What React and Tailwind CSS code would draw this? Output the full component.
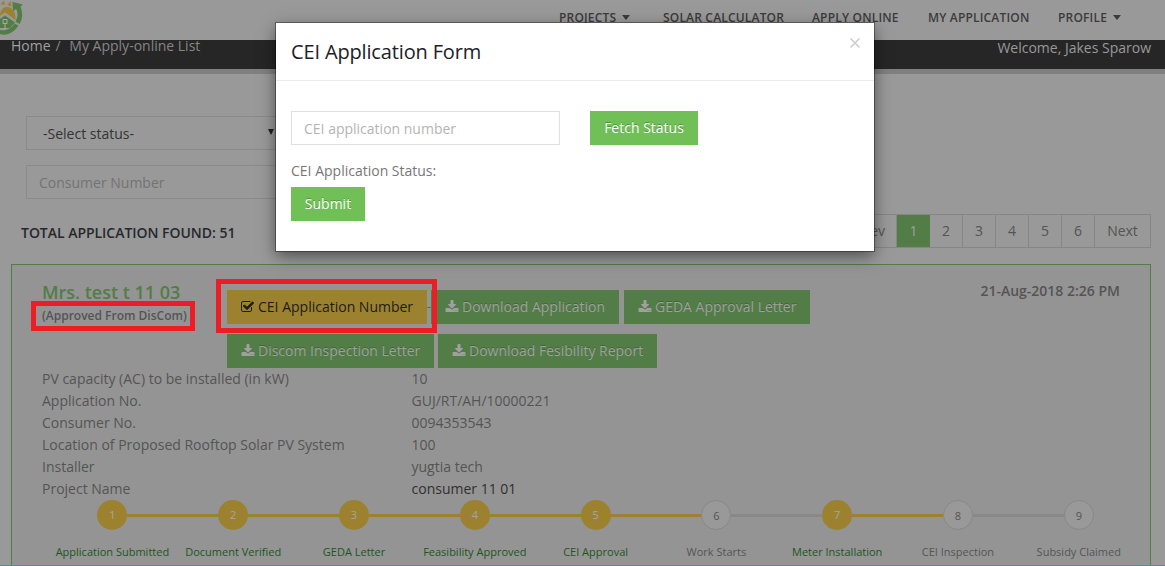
function Caret() {
  return <span className="mb-[2px] ml-[6px] h-0 w-0 border-x-4 border-t-[5px] border-x-transparent border-t-[#3b3b3b]" />;
}

function DownloadIcon() {
  return (
    <svg className="size-[14px] shrink-0" viewBox="0 0 1792 1792" fill="currentColor">
      <path d="M1344 1344q0-26-19-45t-45-19-45 19-19 45 19 45 45 19 45-19 19-45zm256 0q0-26-19-45t-45-19-45 19-19 45 19 45 45 19 45-19 19-45zm128-224v320q0 40-28 68t-68 28h-1472q-40 0-68-28t-28-68v-320q0-40 28-68t68-28h465l135 136q58 56 136 56t136-56l136-136h464q40 0 68 28t28 68zm-325-569q17 41-14 70l-448 448q-18 19-45 19t-45-19l-448-448q-31-29-14-70 17-39 59-39h256v-448q0-26 19-45t45-19h256q26 0 45 19t19 45v448h256q42 0 59 39z" />
    </svg>
  );
}

function CheckIcon() {
  return (
    <svg className="size-[14px] shrink-0" viewBox="64 0 1792 1792" fill="currentColor">
      <path d="M1472 930v318q0 119-84.5 203.5t-203.5 84.5h-832q-119 0-203.5-84.5t-84.5-203.5v-832q0-119 84.5-203.5t203.5-84.5h832q63 0 117 25 15 7 18 23 3 17-9 29l-49 49q-10 10-23 10-3 0-9-2-23-6-45-6h-832q-66 0-113 47t-47 113v832q0 66 47 113t113 47h832q66 0 113-47t47-113v-254q0-13 9-22l64-64q10-10 23-10 6 0 12 3 20 8 20 29zm231-489l-814 814q-24 24-57 24t-57-24l-430-430q-24-24-24-57t24-57l110-110q24-24 57-24t57 24l263 263 647-647q24-24 57-24t57 24l110 110q24 24 24 57t-24 57z" />
    </svg>
  );
}

function Logo() {
  return (
    <svg className="block h-9 w-6" viewBox="0 0 24 36">
      <path d="M0 14C1 9 4 6.500 8 7C13 8 16 13 15.500 20L5 12.500L0 16Z" fill="#9c822e" />
      <path d="M0.500 4.500L3.500 0.500L5.500 4.500ZM7 5L10.500 1L11.500 6.500Z" fill="#9c822e" />
      <path d="M0 19L5 15.500L15 22.500L10 28H0Z" fill="#527d46" />
      <path d="M0 17L5 13.500L19 24" fill="none" stroke="#999" strokeWidth="1.500" />
      <path d="M12.500 2L23 4.500L20.500 6.500C23.500 15 22 20 19.500 24L15.500 21.500C18.500 16 18 12 16 9L13 11Z" fill="#527d46" />
      <path d="M18.500 25.500C13 34 5 36 0 34V30C6 31 11 29 14.500 23.500Z" fill="#527d46" />
      <path d="M3 19.500H7V23.500H3ZM5 24V29" fill="none" stroke="#aaa" strokeWidth="1" />
    </svg>
  );
}

const nav = [
  ["PROJECTS", true, "w-[104px]"],
  ["SOLAR CALCULATOR", false, "w-[149px]"],
  ["APPLY ONLINE", false, "w-[116px]"],
  ["MY APPLICATION", false, "w-[130px]"],
  ["PROFILE", true, "w-[107px]"],
];

const details = [
  ["PV capacity (AC) to be installed (in kW)", "10"],
  ["Application No.", "GUJ/RT/AH/10000221"],
  ["Consumer No.", "0094353543"],
  ["Location of Proposed Rooftop Solar PV System", "100"],
  ["Installer", "yugtia tech"],
  ["Project Name", "consumer 11 01"],
];

const steps = [
  ["Application Submitted", true],
  ["Document Verified", true],
  ["GEDA Letter", true],
  ["Feasibility Approved", true],
  ["CEI Approval", true],
  ["Work Starts", false],
  ["Meter Installation", true],
  ["CEI Inspection", false],
  ["Subsidy Claimed", false],
];

function GreenButton({ children, width }) {
  return (
    <button className={"flex h-[34px] shrink-0 items-center gap-[3px] whitespace-nowrap bg-[#527d46] pl-[14px] text-[#a0a0a0] [text-shadow:0_-1px_0_rgba(0,0,0,0.2)] " + width}>
      <DownloadIcon />
      <span>{children}</span>
    </button>
  );
}

function Modal() {
  return (
    <div className="absolute left-[276px] top-[23px] h-[228px] w-[598px] bg-white shadow-[0_5px_15px_rgba(0,0,0,0.5),0_0_0_1px_rgba(0,0,0,0.35)]">
      <div className="flex h-[58px] items-start justify-between border-b border-[#ebebeb] pl-[15px] pr-[14px]">
        <h4 className="pt-[14px] text-[20px] leading-[30px] tracking-[-0.15px] text-[#1d2127]">CEI Application Form</h4>
        <svg className="mt-[15px] size-[10px]" viewBox="0 0 10 10" stroke="#ccc" strokeWidth="1.500">
          <path d="M0.500 0.500L9.500 9.500M9.500 0.500L0.500 9.500" />
        </svg>
      </div>
      <div className="px-[15px] pt-[30px]">
        <div className="flex gap-[30px]">
          <div className="flex h-[34px] w-[269px] items-center border border-[#e0e0e0] px-3 pb-px pt-[2px] text-[#b4b4b4]">CEI application number</div>
          <button className="h-[34px] w-[108px] bg-[#71bf57] text-white [text-shadow:0_-1px_0_rgba(0,0,0,0.25)]">Fetch Status</button>
        </div>
        <div className="mt-[15px] h-[27px] leading-[22px] text-[#777]">CEI Application Status:</div>
        <button className="h-[34px] w-[74px] bg-[#71bf57] text-white [text-shadow:0_-1px_0_rgba(0,0,0,0.25)]">Submit</button>
      </div>
    </div>
  );
}

export default function App() {
  return (
    <div className="relative flex h-[566px] w-[1165px] flex-col overflow-hidden border-b border-[#1fa3bb] bg-[#999] font-['Open_Sans',sans-serif] text-[14px] leading-[22px] text-[#545454]">
      <header className="flex h-10 shrink-0 items-start justify-between">
        <Logo />
        <nav className="flex pt-2 text-[12px] font-semibold leading-[20px] tracking-[0.18px] text-[#3b3b3b]">
          {nav.map(([name, caret, width]) => (
            <div key={name} className={"flex shrink-0 items-center whitespace-nowrap " + width}>
              {name}
              {caret && <Caret />}
            </div>
          ))}
        </nav>
      </header>
      <div className="flex h-[34px] shrink-0 justify-between border-b-[5px] border-[#808080] bg-[#262626] pl-[11px] pr-[14px]">
        <div className="-mt-[5px] whitespace-pre text-[#858585]"><span className="text-[#a0a0a0]">Home</span><span className="mx-[5px]">/</span> <span>My Apply-online List</span></div>
        <div className="-mt-[3px] text-[#999]">Welcome, Jakes Sparow</div>
      </div>

      <div className="flex h-[190px] shrink-0 flex-col px-[21px] pt-[42px]">
        <div className="ml-[5px] flex h-[34px] w-[260px] shrink-0 items-center justify-between border border-[#8a8a8a] pl-4 pr-[11px] pt-[2px] text-[#333]">
          -Select status-
          <span className="mb-[4px] h-0 w-0 border-x-[3px] border-t-[6px] border-x-transparent border-t-[#222]" />
        </div>
        <div className="ml-[5px] mt-[15px] flex h-[34px] w-[260px] shrink-0 items-center border border-[#8a8a8a] px-3 pt-[2px] text-[#737373]">Consumer Number</div>
        <div className="-mr-[7px] mt-[15px] flex items-start justify-between">
          <div className="pt-[8px] text-[14px] font-semibold tracking-[-0.03px] text-[#26282c]">TOTAL APPLICATION FOUND: 51</div>
          <div className="flex h-[34px] border border-[#868686] text-center leading-[31px]">
            <span className="w-[53px] border-r border-[#868686] pl-px">Prev</span>
            <span className="w-[33px] bg-[#527d46] text-[#a0a0a0]">1</span>
            {["2", "3", "4", "5", "6"].map((n) => (
              <span key={n} className="w-[33px] border-r border-[#868686]">{n}</span>
            ))}
            <span className="w-[55px]">Next</span>
          </div>
        </div>
      </div>

      <section className="ml-[11px] w-[1140px] grow border border-b-0 border-[#527d46] bg-[#949494] px-[30px]">
        <div className="flex h-[103px] pt-[15px]">
          <div className="w-[185px] shrink-0">
            <h3 className="text-[18px] font-semibold leading-[24px] text-[#527d46]">Mrs. test t 11 03</h3>
            <div className="whitespace-nowrap text-[12px] font-semibold leading-[23px]">(Approved From DisCom)</div>
          </div>
          <div className="grow pt-[10px]">
            <div className="flex items-center">
              <button className="flex h-[34px] w-[200px] shrink-0 items-center gap-[3px] whitespace-nowrap bg-[#9c822e] pl-[14px] text-[#1c1c1c]">
                <CheckIcon />
                CEI Application Number
              </button>
              <span className="h-px w-1 bg-[#527d46]" />
              <GreenButton width="w-[188px]">Download Application</GreenButton>
              <span className="w-[5px]" />
              <GreenButton width="w-[186px]">GEDA Approval Letter</GreenButton>
            </div>
            <div className="mt-[10px] flex gap-1">
              <GreenButton width="w-[207px]">Discom Inspection Letter</GreenButton>
              <GreenButton width="w-[219px]">Download Fesibility Report</GreenButton>
            </div>
          </div>
          <div className="shrink-0 font-semibold">21-Aug-2018 2:26 PM</div>
        </div>
        <dl>
          {details.map(([label, value], i) => (
            <div key={label} className="flex h-[22px]">
              <dt className="w-[369.500px]">{label}</dt>
              <dd className={i === 5 ? "text-[#303030]" : ""}>{value}</dd>
            </div>
          ))}
        </dl>
        <div className="ml-[10px] flex w-[1087px]">
          {steps.map(([label, done], i) => (
            <div key={label} className="flex w-[120.800px] shrink-0 flex-col items-center">
              <div className="flex w-full items-center">
                <span className={"h-[3px] grow " + (i === 0 ? "" : steps[i - 1][1] ? "bg-[#9c822e]" : "bg-[#888]")} />
                <span className={"flex size-[30px] shrink-0 items-center justify-center rounded-full text-[11px] " + (done ? "bg-[#9c822e] text-[#a5a5a5]" : "border border-[#888] bg-[#999] pt-[2px]")}>{i + 1}</span>
                <span className={"h-[3px] grow " + (i === 8 ? "" : done ? "bg-[#9c822e]" : "bg-[#888]")} />
              </div>
              <div className={"mt-[11px] whitespace-nowrap text-[11px] " + (done ? "text-[#1c561c]" : "")}>{label}</div>
            </div>
          ))}
        </div>
      </section>
      <Modal />
      <div className="absolute left-[31px] top-[301px] h-[30px] w-[164px] border-[5px] border-[#ee1c24]" />
      <div className="absolute left-[216px] top-[279px] h-[54px] w-[221px] border-[5px] border-[#ee1c24]" />
    </div>
  );
}
